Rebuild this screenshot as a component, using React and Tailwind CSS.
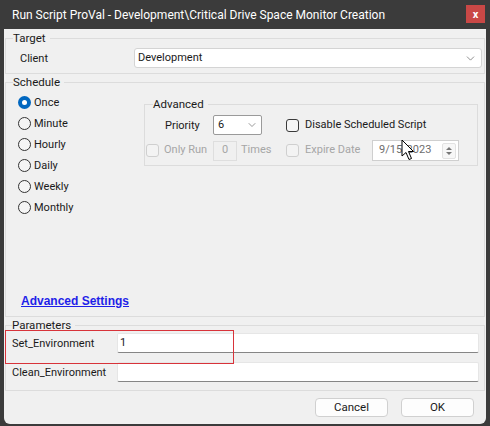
import { ChevronDown } from 'lucide-react'

const FONT = { fontFamily: 'Roboto, "Noto Sans", sans-serif' }

function Radio({ label, checked }) {
  return (
    <div className="flex h-[21px] items-center">
      {checked ? (
        <span className="flex h-[13px] w-[13px] items-center justify-center rounded-full bg-[#0067c0]">
          <span className="h-[5px] w-[5px] rounded-full bg-white" />
        </span>
      ) : (
        <span className="h-[13px] w-[13px] rounded-full border border-[#333] bg-[#f5f5f5]" />
      )}
      <span className="ml-[3px] pt-[2px] text-[#1a1a1a]">{label}</span>
    </div>
  )
}

function Check({ disabled }) {
  return (
    <span
      className={
        disabled
          ? 'inline-block h-[13px] w-[13px] shrink-0 rounded-[3px] border border-[#cfcfcf] bg-[#f3f3f3]'
          : 'inline-block h-[13px] w-[13px] shrink-0 rounded-[3px] border border-[#3a3a3a] bg-[#f6f6f6]'
      }
    />
  )
}

function Cursor() {
  return (
    <svg className="absolute left-[401px] top-[139px]" width="14" height="22" viewBox="0 0 14 22">
      <path
        d="M1 1 L1 17 L5 13.5 L8 20.5 L10.5 19.5 L7.5 12.5 L12.5 12.5 Z"
        fill="#fff"
        stroke="#000"
        strokeWidth="1"
        strokeLinejoin="round"
      />
    </svg>
  )
}

export default function App() {
  return (
    <div className="relative flex h-[426px] w-[490px] flex-col bg-[#3b3b3b] text-[11px]" style={FONT}>
      {/* title bar */}
      <div className="flex h-[29px] shrink-0 items-center justify-between pl-[12px] pr-[5px]">
        <span className="text-[12px] text-white">
          Run Script ProVal - Development\Critical Drive Space Monitor Creation
        </span>
        <span className="mb-[1px] flex h-[18px] w-[19px] items-center justify-center bg-[#c94846] text-[11px] font-bold leading-none text-white">
          x
        </span>
      </div>

      <div className="mx-[4px] mb-[2px] flex flex-1 flex-col rounded-b-[6px] bg-[#f0f0f0]">
        {/* Target */}
        <fieldset className="mx-px mt-px h-[44px] border border-[#dcdcdc] pt-[2px]">
          <legend className="ml-[7px] pr-[4px] text-[11.5px] leading-[16px] text-[#1a1a1a]">Target</legend>
          <div className="flex h-[20px] items-center">
            <span className="w-[128px] pl-[14px] pt-[3px] text-[#1a1a1a]">Client</span>
            <div className="flex h-[20px] w-[348px] items-center justify-between rounded-[3px] border border-[#d4d4d4] bg-white pl-[3px] pr-[4px]">
              <span className="pt-[1px] text-[#1a1a1a]">Development</span>
              <ChevronDown size={13} strokeWidth={1.2} className="text-[#555]" />
            </div>
          </div>
        </fieldset>

        {/* Schedule */}
        <fieldset className="mx-px h-[243px] border border-[#dcdcdc]">
          <legend className="ml-[7px] pr-[4px] text-[11.5px] leading-[16px] text-[#1a1a1a]">Schedule</legend>
          <div className="flex h-[226px] flex-col">
            <div className="flex">
              <div className="w-[138px] pl-[12px] pt-[2px]">
                <Radio label="Once" checked />
                <Radio label="Minute" />
                <Radio label="Hourly" />
                <Radio label="Daily" />
                <Radio label="Weekly" />
                <Radio label="Monthly" />
              </div>
              <fieldset className="mt-[6px] h-[70px] w-[334px] border border-[#dcdcdc]">
                <legend className="ml-[8px] pr-[4px] text-[11.5px] leading-[16px] text-[#1a1a1a]">Advanced</legend>
                <div className="grid grid-cols-[68px_73px_86px_1fr] items-center pt-[3px]">
                  <span className="pl-[20px] pt-[3px] text-[#1a1a1a]">Priority</span>
                  <div className="flex h-[20px] w-[49px] items-center justify-between rounded-[2px] border border-[#9a9a9a] bg-white pl-[4px] pr-[3px]">
                    <span className="text-[#1a1a1a]">6</span>
                    <ChevronDown size={12} strokeWidth={1.2} className="text-[#555]" />
                  </div>
                  <div className="col-span-2 flex items-center">
                    <Check />
                    <span className="ml-[6px] whitespace-nowrap text-[#1a1a1a]">Disable Scheduled Script</span>
                  </div>
                </div>
                <div className="mt-[5px] grid grid-cols-[68px_73px_86px_1fr] items-center">
                  <div className="flex items-center pl-[1px]">
                    <Check disabled />
                    <span className="ml-[5px] whitespace-nowrap text-[#a6a6a6]">Only Run</span>
                  </div>
                  <div className="flex items-center">
                    <span className="flex h-[20px] w-[24px] items-center justify-center border border-[#dedede] text-[#a6a6a6]">
                      0
                    </span>
                    <span className="ml-[4px] text-[#a6a6a6]">Times</span>
                  </div>
                  <div className="flex items-center">
                    <Check disabled />
                    <span className="ml-[6px] whitespace-nowrap text-[#a6a6a6]">Expire Date</span>
                  </div>
                  <div className="flex h-[21px] w-[87px] items-center justify-between border border-[#cfcfcf] bg-white pl-[6px] pr-[2px]">
                    <span className="text-[#6d6d6d]">9/15/2023</span>
                    <span className="flex h-[16px] w-[14px] flex-col items-center justify-center gap-[2px] rounded-[2px] border border-[#e2e2e2] bg-[#f7f7f7]">
                      <span className="h-0 w-0 border-x-[3px] border-b-[3px] border-x-transparent border-b-[#777]" />
                      <span className="h-0 w-0 border-x-[3px] border-t-[3px] border-x-transparent border-t-[#777]" />
                    </span>
                  </div>
                </div>
              </fieldset>
            </div>
            <div className="mt-auto pb-[6px] pl-[15px]">
              <span
                className="text-[12px] font-bold text-[#1f1fe8] underline"
                style={{ fontFamily: '"Liberation Sans", Arial, sans-serif' }}
              >
                Advanced Settings
              </span>
            </div>
          </div>
        </fieldset>

        {/* Parameters */}
        <fieldset className="mx-px border border-[#dcdcdc] pb-[8px]">
          <legend className="ml-[6px] pr-[4px] text-[11.5px] leading-[16px] text-[#1a1a1a]">Parameters</legend>
          <div className="relative flex h-[20px] items-center">
            <span className="w-[111px] pl-[6px] pt-[3px] text-[#1a1a1a]">Set_Environment</span>
            <div className="flex h-[20px] w-[362px] items-center rounded-[2px] border border-[#e6e6e6] border-b-[#868686] bg-white pl-[2px] text-[#1a1a1a]">
              1
            </div>
            <div className="pointer-events-none absolute left-[-1px] top-[-3px] h-[34px] w-[229px] border border-[#d8333a]" />
          </div>
          <div className="mt-[9px] flex h-[20px] items-center">
            <span className="w-[111px] pl-[6px] pt-[3px] text-[#1a1a1a]">Clean_Environment</span>
            <div className="h-[20px] w-[362px] rounded-[2px] border border-[#e6e6e6] border-b-[#868686] bg-white" />
          </div>
        </fieldset>

        {/* buttons */}
        <div className="mt-[7px] flex justify-end gap-[13px] pr-[12px]">
          <button className="h-[19px] w-[73px] rounded-[4px] border border-[#d0d0d0] bg-[#fdfdfd] text-[11.5px] text-[#1a1a1a]">
            Cancel
          </button>
          <button className="h-[19px] w-[73px] rounded-[4px] border border-[#d0d0d0] bg-[#fdfdfd] text-[11.5px] text-[#1a1a1a]">
            OK
          </button>
        </div>
      </div>

      <Cursor />
    </div>
  )
}
